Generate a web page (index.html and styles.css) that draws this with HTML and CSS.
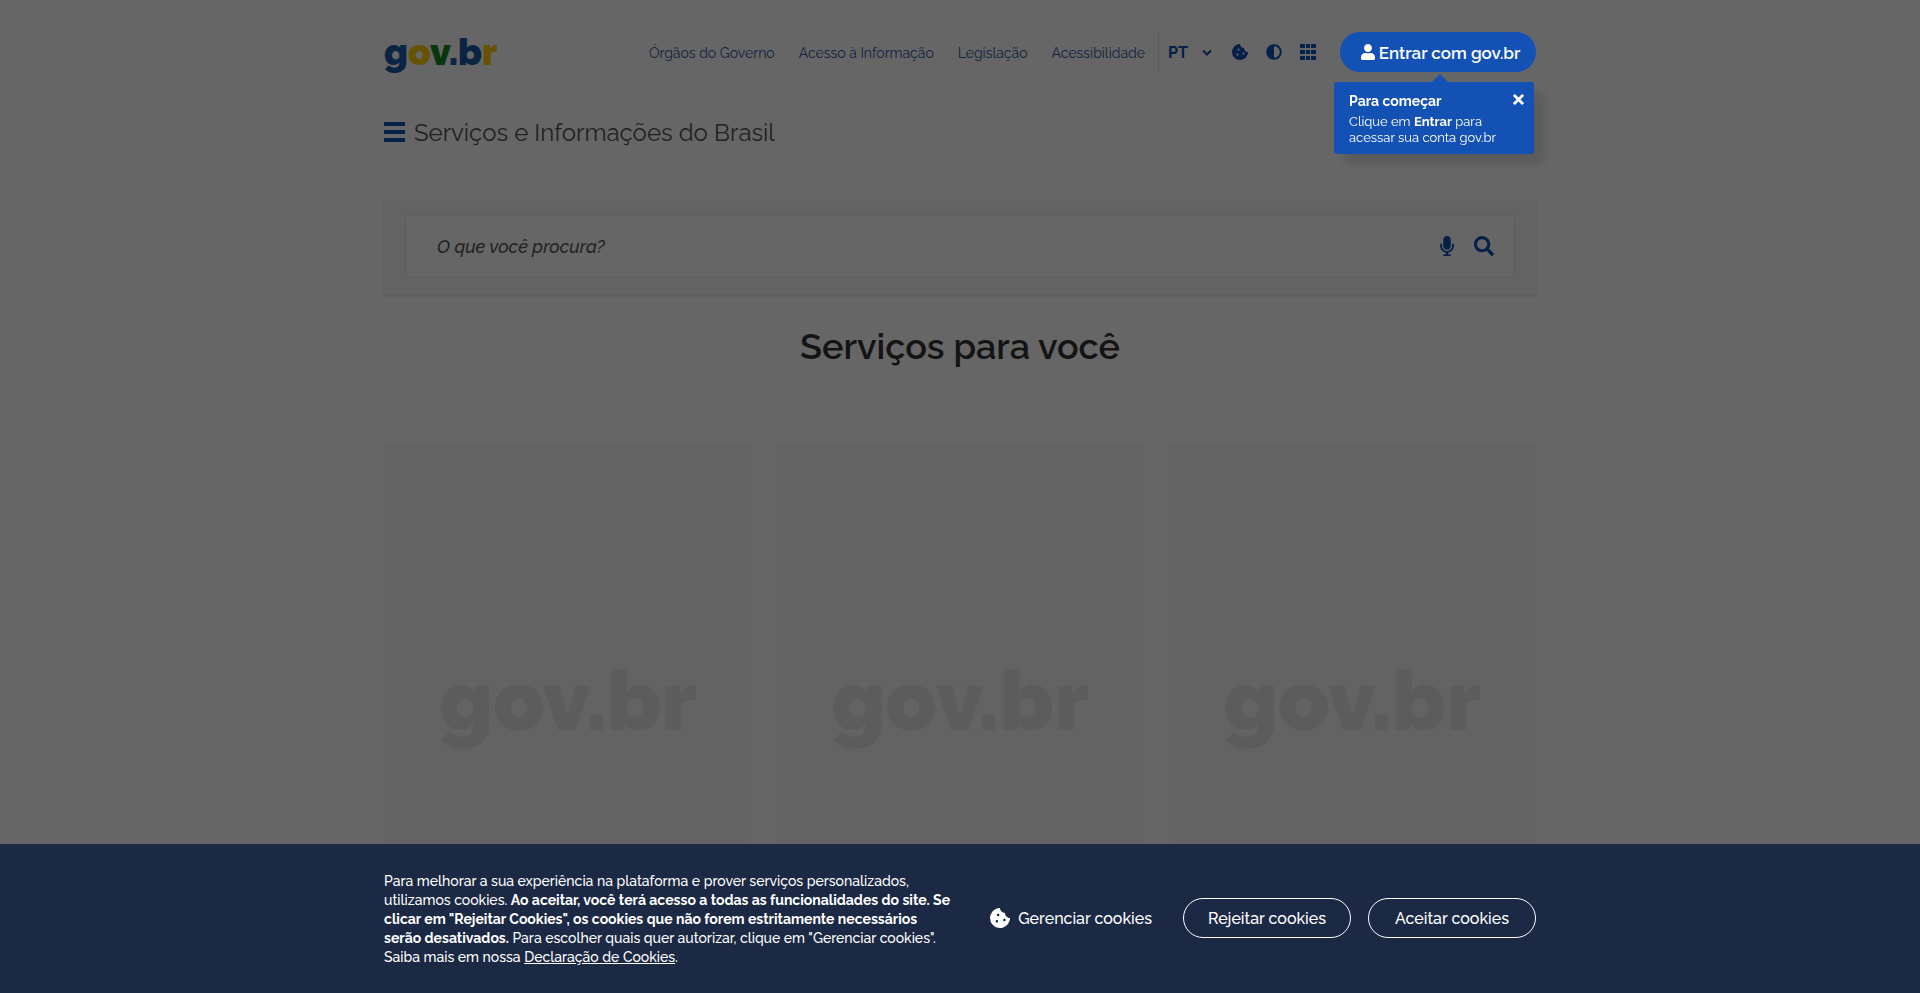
FILE: index.html
```html
<!DOCTYPE html>
<html lang="pt-br">
<head>
  <meta charset="utf-8">
  <meta name="viewport" content="width=device-width, initial-scale=1">
  <title>gov.br - Serviços e Informações do Brasil</title>
  <link rel="stylesheet" href="styles.css">
</head>
<body>
  <header class="container header">
    <div class="header-top">
      <a href="#" class="logo" aria-label="gov.br"><span class="azul">g</span><span class="amarelo">o</span><span class="verde">v</span><span class="azul">.b</span><span class="amarelo">r</span></a>

      <div class="header-actions">
        <nav class="header-links">
          <a href="#">Órgãos do Governo</a>
          <a href="#">Acesso à Informação</a>
          <a href="#">Legislação</a>
          <a href="#">Acessibilidade</a>
        </nav>

        <div class="idioma">
          <select class="idioma-select" aria-label="Idioma">
            <option>PT</option>
            <option>EN</option>
            <option>ES</option>
          </select>
          <svg class="chevron" viewBox="0 0 10 7"><path d="M1 1.5l4 4 4-4" fill="none" stroke="currentColor" stroke-width="2"/></svg>
        </div>

        <div class="header-icons">
          <button class="icon-button" aria-label="Cookies">
            <svg viewBox="0 0 512 512"><path d="M510.52 255.82c-69.97-.85-126.47-57.69-126.47-127.86-70.17 0-127-56.49-127.86-126.45-27.26-4.14-55.13.3-79.72 12.82l-69.13 35.22a132.221 132.221 0 0 0-57.79 57.81l-35.1 68.88a132.602 132.602 0 0 0-12.82 80.95l12.08 76.27a132.521 132.521 0 0 0 37.16 72.96l54.77 54.76a132.036 132.036 0 0 0 72.71 37.06l76.71 12.15c27.51 4.36 55.7-.11 80.53-12.76l69.13-35.21a132.273 132.273 0 0 0 57.79-57.81l35.1-68.88c12.56-24.64 17.01-52.58 12.91-79.91zM176 368c-17.67 0-32-14.33-32-32s14.33-32 32-32 32 14.33 32 32-14.33 32-32 32zm32-160c-17.67 0-32-14.33-32-32s14.33-32 32-32 32 14.33 32 32-14.33 32-32 32zm160 128c-17.67 0-32-14.33-32-32s14.33-32 32-32 32 14.33 32 32-14.33 32-32 32z"/></svg>
          </button>
          <button class="icon-button" aria-label="Alto contraste">
            <svg viewBox="0 0 512 512"><path d="M8 256c0 136.966 111.033 248 248 248s248-111.034 248-248S392.966 8 256 8 8 119.033 8 256zm248 184V72c101.705 0 184 82.311 184 184 0 101.705-82.311 184-184 184z"/></svg>
          </button>
          <button class="icon-button" aria-label="Sistemas">
            <svg viewBox="0 0 16 16"><path d="M0 0h5v4H0zM6 0h4v4H6zM11 0h5v4h-5zM0 6h5v4H0zM6 6h4v4H6zM11 6h5v4h-5zM0 12h5v4H0zM6 12h4v4H6zM11 12h5v4h-5z"/></svg>
          </button>
        </div>

        <div class="login">
          <button class="login-button">
            <svg viewBox="0 0 448 512"><path d="M224 256c70.7 0 128-57.3 128-128S294.7 0 224 0 96 57.3 96 128s57.3 128 128 128zm89.6 32h-16.7c-22.2 10.2-46.9 16-72.9 16s-50.6-5.8-72.9-16h-16.7C60.2 288 0 348.2 0 422.4V464c0 26.5 21.5 48 48 48h352c26.5 0 48-21.5 48-48v-41.6c0-74.2-60.2-134.4-134.4-134.4z"/></svg>
            <span>Entrar com gov.br</span>
          </button>
          <div class="login-tooltip" role="tooltip">
            <strong class="tooltip-title">Para começar</strong>
            <p>Clique em <b>Entrar</b> para<br>acessar sua conta gov.br</p>
            <button class="tooltip-close" aria-label="Fechar">
              <svg viewBox="0 0 12 12"><path d="M1 1l10 10M11 1L1 11" stroke="currentColor" stroke-width="3"/></svg>
            </button>
          </div>
        </div>
      </div>
    </div>

    <div class="header-title">
      <button class="menu-button" aria-label="Menu principal">
        <svg viewBox="0 0 21 20"><path d="M0 0h21v4H0zM0 8h21v4H0zM0 16h21v4H0z"/></svg>
      </button>
      <a href="#">Serviços e Informações do Brasil</a>
    </div>
  </header>

  <main class="container">
    <form class="search">
      <div class="search-box">
        <input type="text" class="search-input" placeholder="O que você procura?" aria-label="O que você procura?">
        <button type="button" class="search-button" aria-label="Busca por voz">
          <svg class="mic" viewBox="0 0 352 512"><path d="M176 352c53.02 0 96-42.98 96-96V96c0-53.02-42.98-96-96-96S80 42.98 80 96v160c0 53.02 42.98 96 96 96zm160-160h-16c-8.84 0-16 7.16-16 16v48c0 74.8-64.49 134.82-140.79 127.38C96.71 376.89 48 317.11 48 250.3V208c0-8.84-7.16-16-16-16H16c-8.84 0-16 7.16-16 16v40.16c0 89.64 63.97 169.55 152 181.69V464H96c-8.84 0-16 7.16-16 16v16c0 8.84 7.16 16 16 16h160c8.84 0 16-7.16 16-16v-16c0-8.84-7.16-16-16-16h-56v-33.77C285.71 418.47 352 344.9 352 256v-48c0-8.84-7.16-16-16-16z"/></svg>
        </button>
        <button type="submit" class="search-button" aria-label="Buscar">
          <svg class="lupa" viewBox="0 0 512 512"><path d="M505 442.7L405.3 343c-4.5-4.5-10.6-7-17-7H372c27.6-35.3 44-79.7 44-128C416 93.1 322.9 0 208 0S0 93.1 0 208s93.1 208 208 208c48.3 0 92.7-16.4 128-44v16.3c0 6.4 2.5 12.5 7 17l99.7 99.7c9.4 9.4 24.6 9.4 33.9 0l28.3-28.3c9.4-9.4 9.4-24.6.1-34zM208 336c-70.7 0-128-57.2-128-128 0-70.7 57.2-128 128-128 70.7 0 128 57.2 128 128 0 70.7-57.2 128-128 128z"/></svg>
        </button>
      </div>
    </form>

    <h1>Serviços para você</h1>

    <div class="cards">
      <div class="card">gov.br</div>
      <div class="card">gov.br</div>
      <div class="card">gov.br</div>
    </div>
  </main>

  <div class="overlay"></div>

  <section class="cookie-bar" aria-label="Cookies">
    <div class="container cookie-content">
      <p class="cookie-text">
        Para melhorar a sua experiência na plataforma e prover serviços personalizados,<br>
        utilizamos cookies. <b>Ao aceitar, você terá acesso a todas as funcionalidades do site. Se<br>
        clicar em "Rejeitar Cookies", os cookies que não forem estritamente necessários<br>
        serão desativados.</b> Para escolher quais quer autorizar, clique em "Gerenciar cookies".<br>
        Saiba mais em nossa <a href="#">Declaração de Cookies</a>.
      </p>
      <div class="cookie-buttons">
        <button class="cookie-manage">
          <svg viewBox="0 0 512 512"><path d="M510.52 255.82c-69.97-.85-126.47-57.69-126.47-127.86-70.17 0-127-56.49-127.86-126.45-27.26-4.14-55.13.3-79.72 12.82l-69.13 35.22a132.221 132.221 0 0 0-57.79 57.81l-35.1 68.88a132.602 132.602 0 0 0-12.82 80.95l12.08 76.27a132.521 132.521 0 0 0 37.16 72.96l54.77 54.76a132.036 132.036 0 0 0 72.71 37.06l76.71 12.15c27.51 4.36 55.7-.11 80.53-12.76l69.13-35.21a132.273 132.273 0 0 0 57.79-57.81l35.1-68.88c12.56-24.64 17.01-52.58 12.91-79.91zM176 368c-17.67 0-32-14.33-32-32s14.33-32 32-32 32 14.33 32 32-14.33 32-32 32zm32-160c-17.67 0-32-14.33-32-32s14.33-32 32-32 32 14.33 32 32-14.33 32-32 32zm160 128c-17.67 0-32-14.33-32-32s14.33-32 32-32 32 14.33 32 32-14.33 32-32 32z"/></svg>
          Gerenciar cookies
        </button>
        <button class="cookie-button">Rejeitar cookies</button>
        <button class="cookie-button">Aceitar cookies</button>
      </div>
    </div>
  </section>
</body>
</html>
```

FILE: styles.css
```css
* {
  box-sizing: border-box;
}

body {
  margin: 0;
  background-color: #ffffff;
  color: #333333;
  font-family: Raleway, Lato, "Open Sans", sans-serif;
  font-size: 14px;
}

a {
  color: inherit;
  text-decoration: none;
}

button {
  padding: 0;
  border: none;
  background: none;
  color: #1351b4;
  font-family: inherit;
  white-space: nowrap;
  cursor: pointer;
}

svg {
  display: block;
  fill: currentColor;
}

.container {
  max-width: 1152px;
  margin: 0 auto;
}

/* Header */
.header {
  padding-top: 32px;
}

.header-top {
  display: flex;
  justify-content: space-between;
  align-items: center;
  height: 40px;
}

.logo {
  font-size: 37px;
  font-weight: 900;
  line-height: 40px;
}

.azul {
  color: #1c5aa8;
}

.amarelo {
  color: #ffcd07;
}

.verde {
  color: #168821;
}

.header-actions {
  display: flex;
  align-items: center;
}

.header-links {
  display: flex;
  gap: 24px;
  margin-right: 13px;
  padding-top: 2px;
  color: #34579a;
}

.idioma {
  display: flex;
  align-items: center;
  height: 40px;
  margin-right: 20px;
  padding-left: 9px;
  border-left: 1px solid #e2e2e2;
  color: #1351b4;
}

.idioma-select {
  width: 34px;
  padding: 0;
  border: none;
  background: none;
  appearance: none;
  color: inherit;
  font-family: inherit;
  font-size: 16px;
  font-weight: 700;
}

.chevron {
  width: 10px;
  height: 7px;
}

.header-icons {
  display: flex;
  gap: 18px;
  margin-right: 24px;
}

.icon-button svg {
  width: 16px;
  height: 16px;
}

/* Login stays above the overlay */
.login {
  position: relative;
  z-index: 20;
}

.login-button {
  display: flex;
  justify-content: center;
  align-items: center;
  gap: 4px;
  width: 196px;
  height: 40px;
  padding-left: 5px;
  border-radius: 20px;
  background-color: #1351b4;
  color: #ffffff;
  font-size: 17px;
  font-weight: 600;
}

.login-button span {
  padding-top: 2px;
}

.login-button svg {
  width: 14px;
  height: 16px;
}

.login-tooltip {
  position: absolute;
  top: 50px;
  right: 2px;
  width: 200px;
  padding: 10px 15px 8px;
  border-radius: 3px;
  background-color: #1351b4;
  box-shadow: 10px 10px 6px rgba(0, 0, 0, 0.1);
  color: #ffffff;
  font-size: 13px;
  line-height: 16px;
}

.login-tooltip::before {
  content: "";
  position: absolute;
  top: -8px;
  left: 98px;
  border: 8px solid transparent;
  border-top: none;
  border-bottom-color: #1351b4;
}

.login-tooltip p {
  margin: 0;
}

.tooltip-title {
  display: block;
  margin-bottom: 4px;
  font-size: 14px;
  line-height: 18px;
}

.tooltip-close {
  position: absolute;
  top: 12px;
  right: 10px;
  color: #ffffff;
}

.tooltip-close svg {
  width: 11px;
  height: 11px;
}

.header-title {
  display: flex;
  align-items: center;
  gap: 9px;
  height: 40px;
  margin-top: 40px;
  color: #555555;
  font-size: 24px;
}

.menu-button svg {
  width: 21px;
  height: 20px;
}

/* Search */
.search {
  margin-top: 48px;
  padding: 16px 22px 18px;
  background-color: #f8f8f8;
  box-shadow: 0 2px 4px rgba(0, 0, 0, 0.12);
}

.search-box {
  display: flex;
  align-items: center;
  gap: 20px;
  height: 60px;
  padding: 0 20px 0 31px;
  background-color: #ffffff;
  box-shadow: 0 0 4px rgba(0, 0, 0, 0.1);
}

.search-input {
  flex: 1;
  min-width: 0;
  padding: 0;
  border: none;
  background: none;
  font-family: inherit;
  font-size: 18px;
}

.search-input::placeholder {
  color: #555555;
  font-style: italic;
  font-weight: 500;
}

.mic {
  width: 14px;
  height: 20px;
}

.lupa {
  width: 20px;
  height: 20px;
}

h1 {
  margin: 31px 0 77px;
  font-size: 36px;
  font-weight: 600;
  line-height: 42px;
  text-align: center;
}

.cards {
  display: grid;
  grid-template-columns: repeat(3, 1fr);
  gap: 25px;
}

.card {
  display: flex;
  justify-content: center;
  align-items: center;
  height: 512px;
  background-color: #f8f8f8;
  color: #e6e6e6;
  font-size: 84px;
  font-weight: 900;
}

.overlay {
  position: fixed;
  inset: 0;
  z-index: 10;
  background-color: rgba(0, 0, 0, 0.6);
}

/* Cookies */
.cookie-bar {
  position: fixed;
  right: 0;
  bottom: 0;
  left: 0;
  z-index: 30;
  padding: 28px 0 26px;
  background-color: #1b2945;
  color: #ffffff;
}

.cookie-content {
  display: flex;
  justify-content: space-between;
  align-items: flex-start;
}

.cookie-text {
  margin: 0;
  font-weight: 500;
  line-height: 19px;
  white-space: nowrap;
}

.cookie-text b {
  font-weight: 700;
}

.cookie-text a {
  text-decoration: underline;
}

.cookie-buttons {
  display: flex;
  align-items: center;
  gap: 17px;
  padding-top: 26px;
}

.cookie-manage,
.cookie-button {
  height: 40px;
  color: #ffffff;
  font-size: 16px;
  font-weight: 500;
}

.cookie-manage {
  display: flex;
  align-items: center;
  gap: 8px;
  margin-right: 14px;
}

.cookie-manage svg {
  width: 20px;
  height: 20px;
}

.cookie-button {
  width: 168px;
  border: 1px solid #ffffff;
  border-radius: 20px;
}
```
